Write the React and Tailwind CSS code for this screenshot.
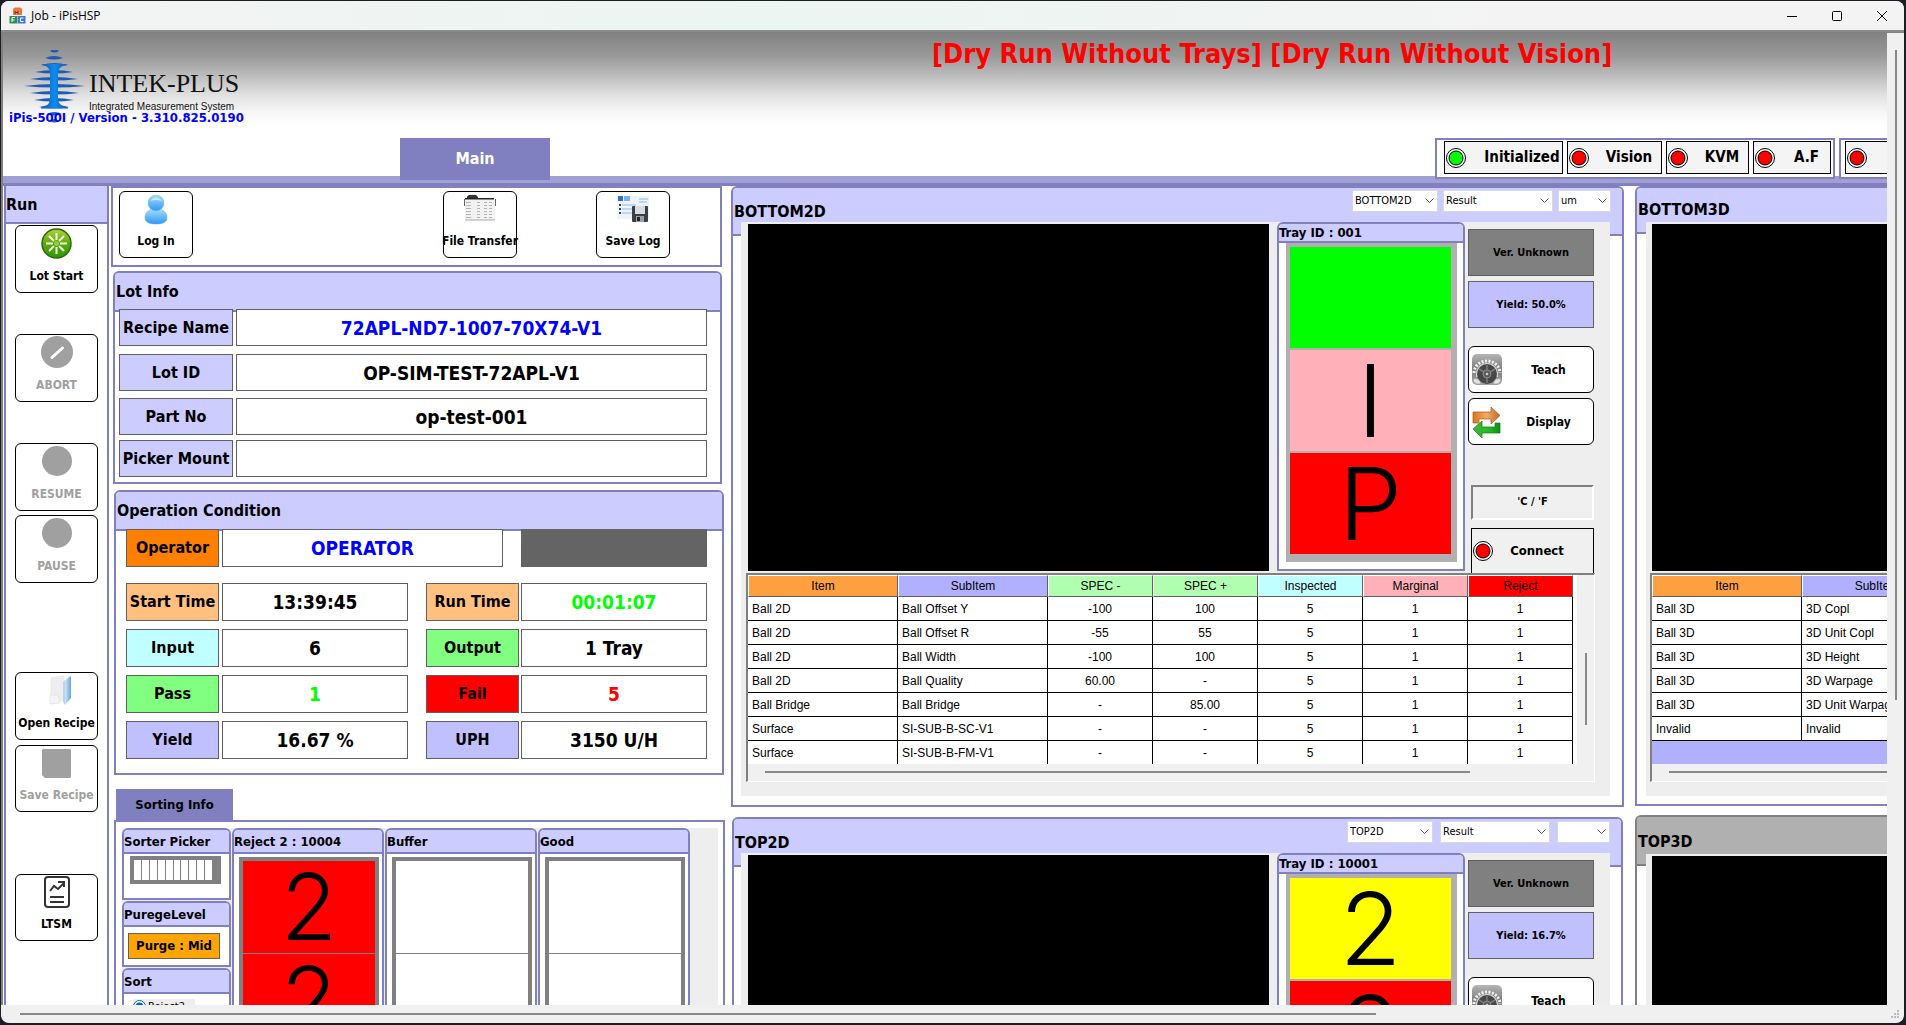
import React from "react";

/* ---------- icons ---------- */

function AppIcon() {
  return (
    <svg width="17" height="17" viewBox="0 0 17 17" aria-hidden="true">
      <path d="M4 2l2-1.500h5.500L13 2v6H4z" fill="#e8763a" />
      <rect x="4.500" y="2.500" width="6.500" height="5.500" fill="#f08a4a" />
      <path d="M6 3.500v4M9 3.500v4M6 5.500h3" stroke="#8c1c10" />
      <rect x="0.500" y="9" width="7.500" height="7.500" fill="#2f8f4e" />
      <path d="M3 15v-4.500h3M3 13h2.500" stroke="#fff" fill="none" />
      <rect x="8.500" y="9" width="8" height="7.500" fill="#3b78c8" />
      <path d="M14.500 11h-3v3.500h3" stroke="#fff" fill="none" />
    </svg>
  );
}

function TowerLogo() {
  const bars = [
    [1, 26, 35], [8, 21, 39], [15, 17, 44], [22, 11, 49], [29, 6, 54], [36, 0, 61], [43, 6, 55], [50, 10, 50], [57, 15, 45], [64, 23, 38], [71, 26, 35],
  ];
  return (
    <svg width="61" height="74" viewBox="0 0 61 74" aria-hidden="true">
      <defs>
        <linearGradient id="tower" x1="0" x2="1">
          <stop offset="0" stopColor="#1f4fa8" />
          <stop offset="0.500" stopColor="#0a8cf0" />
          <stop offset="1" stopColor="#1f4fa8" />
        </linearGradient>
      </defs>
      {bars.map(([y, a, b]) => (
        <path key={y} d={`M${a} ${y}Q${(a + b) / 2} ${y - 4} ${b} ${y}Q${(a + b) / 2} ${y + 3} ${a} ${y}Z`} fill="#1c5cb8" />
      ))}
      <path d="M17 14h27q-9 2-10 8v28q1 6 10 7.500v1H17v-1q8-1.500 9-7.500V22q-1-6-9-8z" fill="url(#tower)" />
    </svg>
  );
}

function PersonIcon() {
  return (
    <svg width="24" height="31" viewBox="0 0 24 31" aria-hidden="true">
      <defs>
        <linearGradient id="person" x1="0" y1="0" x2="0" y2="1">
          <stop offset="0" stopColor="#a8dcfb" />
          <stop offset="1" stopColor="#2f97f5" />
        </linearGradient>
      </defs>
      <path d="M1 24c0-6 4-9 11-9s11 3 11 9c0 4-4 6-11 6S1 28 1 24z" fill="url(#person)" stroke="#5aaef0" strokeWidth="0.500" />
      <circle cx="12" cy="9" r="8" fill="url(#person)" stroke="#7cc4f5" strokeWidth="0.500" />
      <path d="M6 7q6-7 12 0q-6-2-12 0z" fill="#d0ecfd" />
    </svg>
  );
}

function FileTransferIcon() {
  return (
    <svg width="32" height="29" viewBox="0 0 32 29" aria-hidden="true">
      <path d="M3 4V1.500L5 0h7l2 2v2z" fill="#333" />
      <path d="M1 3h29v1.500H1z" fill="#222" />
      <path d="M0.500 4v7M31.500 4v7" stroke="#666" />
      <rect x="1" y="5" width="30" height="20" fill="#f2f2f2" />
      <path d="M2 7.500h27M2 10.500h27M2 13.500h27M2 16.500h27M2 19.500h27M2 22.500h27" stroke="#b4b4b4" strokeDasharray="5 6 3 4 3 2 3 4" />
      <path d="M1 25h30" stroke="#aaa" />
    </svg>
  );
}

function SaveLogIcon() {
  return (
    <svg width="32" height="28" viewBox="0 0 32 28" aria-hidden="true">
      <rect x="0" y="1" width="32" height="23" fill="#eef4fb" />
      <rect x="1" y="1" width="5" height="5" fill="#2f6fc8" />
      <rect x="7" y="1" width="6" height="5" fill="#7db0ea" />
      <path d="M22 4h9M22 7h8" stroke="#8db4e6" />
      <path d="M5 10h14M5 14h12M5 18h12" stroke="#8fb6e8" />
      <path d="M2 10h2M2 14h2M2 18h2" stroke="#1e3f94" strokeWidth="2" />
      <rect x="15" y="11" width="16" height="16" rx="1" fill="#3b3f48" />
      <rect x="18" y="11" width="10" height="8" fill="#d9dde3" />
      <rect x="19" y="21" width="8" height="6" fill="#9aa0aa" />
      <rect x="20" y="22" width="3" height="4" fill="#22252b" />
    </svg>
  );
}

function LotStartIcon() {
  return (
    <svg width="31" height="31" viewBox="0 0 31 31" aria-hidden="true">
      <defs>
        <linearGradient id="lot" x1="0" y1="0" x2="0" y2="1">
          <stop offset="0" stopColor="#b4d23a" />
          <stop offset="0.500" stopColor="#5aa80a" />
          <stop offset="1" stopColor="#2f9a06" />
        </linearGradient>
      </defs>
      <circle cx="15.500" cy="15.500" r="14.500" fill="url(#lot)" stroke="#2c6a08" strokeWidth="1.500" />
      <path d="M15.500 5v7M15.500 19v7M5 15.500h7M19 15.500h7M8 8l5 5M18 18l5 5M23 8l-5 5M13 18l-5 5" stroke="#f4f8e6" strokeWidth="2" />
      <circle cx="15.500" cy="15.500" r="2.500" fill="#8fd03a" />
    </svg>
  );
}

function AbortIcon() {
  return (
    <svg width="32" height="32" viewBox="0 0 32 32" aria-hidden="true">
      <circle cx="16" cy="16" r="16" fill="#a0a0a0" />
      <path d="M11 21.500L21.500 12" stroke="#fff" strokeWidth="3" strokeLinecap="round" />
    </svg>
  );
}

function DiscIcon() {
  return (
    <svg width="30" height="30" viewBox="0 0 30 30" aria-hidden="true">
      <circle cx="15" cy="15" r="15" fill="#a0a0a0" />
    </svg>
  );
}

function OpenRecipeIcon() {
  return (
    <svg width="30" height="31" viewBox="0 0 30 31" aria-hidden="true">
      <defs>
        <linearGradient id="flap" x1="0" x2="1">
          <stop offset="0" stopColor="#d3e7f7" />
          <stop offset="1" stopColor="#6aa5d8" />
        </linearGradient>
      </defs>
      <path d="M9 3l13-2v24L9 29z" fill="#eeeeee" stroke="#dcdcdc" strokeWidth="0.500" />
      <path d="M8 20h8l2 8-10 1z" fill="#f5f5f5" stroke="#d8d8d8" strokeWidth="0.500" />
      <path d="M23 5l6-4v22l-6 7z" fill="url(#flap)" />
      <path d="M23 5l-2 2v20l2 3z" fill="#b7d6ee" />
    </svg>
  );
}

function SaveRecipeIcon() {
  return (
    <svg width="29" height="29" viewBox="0 0 29 29" aria-hidden="true">
      <path d="M1 0h27l1 1v27l-1 1H3l-3-3V1z" fill="#a0a0a0" />
    </svg>
  );
}

function ReportIcon() {
  return (
    <svg width="26" height="32" viewBox="0 0 26 32" fill="none" stroke="#333" strokeWidth="2" aria-hidden="true">
      <rect x="1" y="1" width="24" height="30" rx="3" />
      <path d="M6 15l4-5 4 3 6-6M14 6h6v5" />
      <path d="M6 21h14M6 26h14" />
    </svg>
  );
}

function GearIcon() {
  return (
    <svg width="30" height="31" viewBox="0 0 30 31" aria-hidden="true">
      <defs>
        <linearGradient id="gear" x1="0" y1="0" x2="0" y2="1">
          <stop offset="0" stopColor="#b5b5b5" />
          <stop offset="0.500" stopColor="#7c7c7c" />
          <stop offset="1" stopColor="#a5a5a5" />
        </linearGradient>
      </defs>
      <rect width="30" height="31" rx="5" fill="url(#gear)" />
      <path d="M2 19a13 12 0 0 1 26 0" fill="none" stroke="#f0f0f0" strokeWidth="3" strokeDasharray="2 1.500" />
      <path d="M4 20a11 11 0 0 1 22 0v3H4z" fill="#d8d8d8" />
      <circle cx="15" cy="20" r="10" fill="#484848" />
      <path d="M15 20L7 15M15 20l8-5M15 20v9M15 20V11" stroke="#7a7a7a" strokeWidth="1.500" />
      <circle cx="15" cy="20" r="4" fill="#5c5c5c" stroke="#8c8c8c" />
      <circle cx="15" cy="20" r="1.300" fill="#c8c8c8" />
      <path d="M1 25q6-2 8 5H5q-4-1-4-5zM29 25q-6-2-8 5h4q4-1 4-5z" fill="#e4e4e4" stroke="#888" strokeWidth="0.500" />
    </svg>
  );
}

function SwapIcon() {
  return (
    <svg width="29" height="32" viewBox="0 0 29 32" aria-hidden="true">
      <defs>
        <linearGradient id="swapA" x1="0" x2="1">
          <stop offset="0" stopColor="#d87818" />
          <stop offset="0.500" stopColor="#f8a860" />
          <stop offset="1" stopColor="#b86a30" />
        </linearGradient>
        <linearGradient id="swapB" x1="0" x2="1">
          <stop offset="0" stopColor="#46b040" />
          <stop offset="0.600" stopColor="#1cc01c" />
          <stop offset="1" stopColor="#128a1c" />
        </linearGradient>
      </defs>
      <path d="M1 6h18V1l9 8.500-9 8.500v-5H7v4H1z" fill="url(#swapA)" stroke="#a85a18" strokeWidth="0.700" />
      <path d="M28 17v10H10v5L1 23l9-8v6h13v-4z" fill="url(#swapB)" stroke="#117a1a" strokeWidth="0.700" />
    </svg>
  );
}

function Led({ on }) {
  return (
    <svg width="20" height="20" viewBox="0 0 20 20" className="shrink-0" aria-hidden="true">
      <circle cx="10" cy="10" r="9.500" fill="#fff" stroke="#000" />
      <circle cx="10" cy="10" r="7" fill={on ? "#00ff00" : "#ff0000"} stroke="#000" />
    </svg>
  );
}

/* ---------- shared controls ---------- */

function IconButton({ icon, label, disabled, className = "" }) {
  return (
    <button
      disabled={disabled}
      className={`flex shrink-0 flex-col items-center justify-between whitespace-nowrap rounded-md border border-black bg-white pt-px pb-2 text-[12px] leading-4 font-bold ${
        disabled ? "text-[#a0a0a0]" : "text-black"
      } ${className}`}
    >
      <span className="flex h-8 items-center">{icon}</span>
      <span>{label}</span>
    </button>
  );
}

function Drop({ label, value, className }) {
  return (
    <span className={`relative flex h-[22px] ${className}`}>
      <select aria-label={label} defaultValue={value} className="w-full appearance-none border border-[#d8d8d8] bg-white pl-[2px] text-[11px] leading-4 text-black">
        <option>{value}</option>
      </select>
      <svg width="9" height="6" viewBox="0 0 9 6" className="pointer-events-none absolute top-2 right-1" fill="none" stroke="#555" aria-hidden="true">
        <path d="M0.500 0.500l4 4 4-4" />
      </svg>
    </span>
  );
}

function Group({ title, className = "", children }) {
  return (
    <section className={`flex flex-col rounded-t-md border-2 border-[#8080c0] bg-white ${className}`}>
      <h3 className="flex h-[24px] shrink-0 items-center overflow-hidden rounded-t-sm border-b-2 border-[#8080c0] bg-[#ccccff] pt-px text-[13px] leading-4 font-bold whitespace-nowrap">{title}</h3>
      {children}
    </section>
  );
}

/* ---------- window chrome ---------- */

function TitleBar() {
  return (
    <div className="flex h-[31px] shrink-0 items-center justify-between border-b-2 border-[#8a8a8a] bg-linear-to-r from-[#f3f3f3] via-[#ebf5f1] via-40% to-[#f3f3f3] to-80% pl-2">
      <div className="flex items-center gap-[5px] font-['Open_Sans','Noto_Sans',sans-serif] text-[12px]">
        <AppIcon />
        Job - iPisHSP
      </div>
      <div className="flex">
        <button aria-label="Minimize" className="flex h-7 w-[45px] items-center justify-center">
          <svg width="10" height="10" stroke="#000"><path d="M0 5.500h10" /></svg>
        </button>
        <button aria-label="Maximize" className="flex h-7 w-[45px] items-center justify-center">
          <svg width="10" height="10" fill="none" stroke="#000"><rect x="0.500" y="0.500" width="9" height="9" rx="1" /></svg>
        </button>
        <button aria-label="Close" className="flex h-7 w-[45px] items-center justify-center">
          <svg width="10" height="10" stroke="#000"><path d="M0 0l10 10M10 0L0 10" /></svg>
        </button>
      </div>
    </div>
  );
}

function Status({ label, on, className, textClass = "pl-2" }) {
  return (
    <div className={`flex h-[33px] shrink-0 items-center overflow-hidden border border-black bg-[#f4f4f4] pl-px text-[15px] font-bold ${className}`}>
      <Led on={on} />
      <span className={`flex-1 text-center ${textClass}`}>{label}</span>
    </div>
  );
}

function Header() {
  return (
    <header className="shrink-0">
      <div className="flex h-[143px] bg-[linear-gradient(to_bottom,#828282_0%,#999999_16%,#c2c2c2_32%,#e2e2e2_44%,#f6f6f6_55%,#ffffff_65%)]">
        <div className="w-[397px] shrink-0 pl-[6px]">
          <div className="flex h-[77px] pt-[17px] pl-[15px]">
            <div className="h-[60px]"><TowerLogo /></div>
            <div className="pt-[18px] pl-1 font-['Liberation_Serif',serif] text-[26px] leading-8 whitespace-nowrap text-[#111]">
              INTEK-PLUS
              <div className="font-['Liberation_Sans',sans-serif] text-[10px] leading-[14px]">Integrated Measurement System</div>
            </div>
          </div>
          <div className="relative text-[13px] leading-4 font-bold text-[#0000ff]">iPis-500I / Version - 3.310.825.0190</div>
        </div>
        <div className="flex min-w-0 flex-1 flex-col justify-between">
          <div className="pl-[532px] text-[27px] leading-[42px] font-bold whitespace-nowrap text-[#ff0000]">[Dry Run Without Trays] [Dry Run Without Vision]</div>
          <div className="relative z-10 -mb-1 flex items-start justify-between">
            <button className="h-[42px] w-[150px] bg-[#8080c0] text-[16px] font-bold text-white">Main</button>
            <div className="flex gap-1">
              <div className="flex gap-1 border-2 border-[#8080c0] bg-white pt-px pr-[2px] pb-[3px] pl-[7px]">
                <Status label="Initialized" on className="w-[119px]" textClass="pl-4" />
                <Status label="Vision" className="w-[95px]" />
                <Status label="KVM" className="w-[83px]" />
                <Status label="A.F" className="w-[78px]" />
              </div>
              <div className="w-[48px] overflow-hidden border-2 border-r-0 border-[#8080c0] bg-white pt-px pl-1">
                <Status label="" className="w-[95px]" />
              </div>
            </div>
          </div>
        </div>
      </div>
      <div className="h-[10px] border-b-[3px] border-[#8080c0] bg-[#a0a0d4]" />
    </header>
  );
}

/* ---------- run column ---------- */

function RunColumn() {
  return (
    <nav className="flex w-[105px] shrink-0 flex-col border-x-2 border-[#8080c0] bg-white">
      <h2 className="flex h-[38px] shrink-0 items-center border-b-2 border-[#8080c0] bg-[#ccccff] pt-px text-[16px] font-bold">Run</h2>
      <div className="flex flex-col items-center pt-px">
        <IconButton className="h-[68px] w-[83px]" icon={<LotStartIcon />} label="Lot Start" />
        <IconButton className="mt-[41px] h-[68px] w-[83px]" icon={<AbortIcon />} label="ABORT" disabled />
        <IconButton className="mt-[41px] h-[68px] w-[83px]" icon={<DiscIcon />} label="RESUME" disabled />
        <IconButton className="mt-1 h-[68px] w-[83px]" icon={<DiscIcon />} label="PAUSE" disabled />
        <IconButton className="mt-[89px] h-[68px] w-[83px]" icon={<OpenRecipeIcon />} label="Open Recipe" />
        <IconButton className="mt-[5px] h-[67px] w-[83px]" icon={<SaveRecipeIcon />} label="Save Recipe" disabled />
        <IconButton className="mt-[62px] h-[67px] w-[83px]" icon={<ReportIcon />} label="LTSM" />
      </div>
    </nav>
  );
}

/* ---------- information column ---------- */

function Label({ className, children }) {
  return <div className={`flex shrink-0 items-center justify-center border border-[#606060] text-[16px] font-bold whitespace-nowrap ${className}`}>{children}</div>;
}

function Value({ className = "", children }) {
  return <div className={`flex items-center justify-center border border-[#606060] bg-white pt-px text-[19px] font-bold whitespace-nowrap ${className}`}>{children}</div>;
}

function LotRow({ label, value, className = "", rowClass = "" }) {
  return (
    <div className={`flex h-[37px] gap-[3px] ${rowClass}`}>
      <Label className="w-[114px] bg-[#ccccff]">{label}</Label>
      <Value className={`flex-1 ${className}`}>{value}</Value>
    </div>
  );
}

function ConditionRow({ left, right }) {
  return (
    <div className="flex h-[38px] justify-between">
      <div className="flex gap-[3px]">
        <Label className={`w-[93px] ${left[2]}`}>{left[0]}</Label>
        <Value className={`w-[186px] ${left[3] || ""}`}>{left[1]}</Value>
      </div>
      <div className="flex gap-[2px]">
        <Label className={`w-[93px] ${right[2]}`}>{right[0]}</Label>
        <Value className={`w-[186px] ${right[3] || ""}`}>{right[1]}</Value>
      </div>
    </div>
  );
}

function SortTray({ title, color = "bg-white", mark = "" }) {
  return (
    <Group title={title} className="w-[152px] shrink-0 border-b-0">
      <div className="mt-[3px] mr-[3px] ml-[5px] flex flex-1 flex-col gap-px border-4 border-b-0 border-[#808080] bg-[#808080]">
        {[0, 1].map((i) => (
          <div key={i} className={`h-[92px] shrink-0 overflow-hidden text-center text-[92px] leading-[92px] font-light text-black font-['Inter',sans-serif] ${color}`}>{mark}</div>
        ))}
      </div>
    </Group>
  );
}

function InfoColumn() {
  return (
    <div className="flex w-[614px] shrink-0 flex-col overflow-hidden">
      <div className="mr-[3px] flex h-[81px] shrink-0 border-2 border-[#8080c0] px-[6px] pt-[3px]">
        <IconButton className="h-[67px] w-[74px]" icon={<PersonIcon />} label="Log In" />
        <IconButton className="ml-[250px] h-[67px] w-[74px]" icon={<FileTransferIcon />} label="File Transfer" />
        <IconButton className="ml-[79px] h-[67px] w-[74px]" icon={<SaveLogIcon />} label="Save Log" />
      </div>

      <section className="mt-1 mr-[3px] ml-[2px] h-[213px] shrink-0 rounded-t-md border-2 border-[#8080c0]">
        <h2 className="flex h-[39px] items-center rounded-t-sm border-b-2 border-[#8080c0] bg-[#ccccff] pt-px pl-px text-[16px] font-bold">Lot Info</h2>
        <div className="-mt-[3px] flex flex-col pr-[13px] pl-1">
          <LotRow label="Recipe Name" value="72APL-ND7-1007-70X74-V1" className="text-[#0000ff]" />
          <LotRow rowClass="mt-[8px]" label="Lot ID" value="OP-SIM-TEST-72APL-V1" />
          <LotRow rowClass="mt-[7px]" label="Part No" value="op-test-001" />
          <LotRow rowClass="mt-[5px]" label="Picker Mount" value="" />
        </div>
      </section>

      <section className="mt-[6px] mr-px ml-[3px] h-[285px] shrink-0 rounded-t-md border-2 border-[#8080c0]">
        <h2 className="flex h-[39px] items-center rounded-t-sm border-b-2 border-[#8080c0] bg-[#ccccff] pt-px pl-px text-[16px] font-bold">Operation Condition</h2>
        <div className="-mt-[2px] flex flex-col gap-[8px] pr-[15px] pl-[10px]">
          <div className="mb-2 flex h-[38px] justify-between">
            <div className="flex gap-[3px]">
              <Label className="w-[93px] bg-[#ff8000]">Operator</Label>
              <Value className="w-[281px] text-[#0000ff]">OPERATOR</Value>
            </div>
            <div className="w-[186px] bg-[#646464]" />
          </div>
          <ConditionRow left={["Start Time", "13:39:45", "bg-[#ffc080]"]} right={["Run Time", "00:01:07", "bg-[#ffc080]", "text-[#00ff00]"]} />
          <ConditionRow left={["Input", "6", "bg-[#c0ffff]"]} right={["Output", "1 Tray", "bg-[#80ff80]"]} />
          <ConditionRow left={["Pass", "1", "bg-[#80ff80]", "text-[#00ff00]"]} right={["Fail", "5", "bg-[#ff0000]", "text-[#ff0000]"]} />
          <ConditionRow left={["Yield", "16.67 %", "bg-[#c0c0ff]"]} right={["UPH", "3150 U/H", "bg-[#c0c0ff]"]} />
        </div>
      </section>

      <button className="mt-[14px] ml-[5px] h-[31px] w-[117px] shrink-0 bg-[#8080c0] text-[13px] font-bold">Sorting Info</button>
      <section className="ml-[3px] flex min-h-0 flex-1 overflow-hidden border-2 border-b-0 border-[#8080c0] pt-[6px] pr-[5px] pl-[6px]">
        <div className="flex flex-1 gap-px bg-[#eeeeee]">
          <div className="flex w-[109px] shrink-0 flex-col gap-px">
            <Group title="Sorter Picker" className="h-[72px] shrink-0">
              <div className="mt-[2px] mr-2 ml-[6px] flex h-7 gap-px border-4 border-r-[9px] border-[#808080] bg-[#808080]">
                {Array.from({ length: 10 }, (_, i) => <span key={i} className="flex-1 bg-white" />)}
              </div>
            </Group>
            <Group title="PuregeLevel" className="h-[66px] shrink-0">
              <div className="mt-[6px] mr-[9px] ml-1 flex h-[26px] items-center justify-center border border-[#606060] bg-[#ffa500] text-[13px] font-bold">Purge : Mid</div>
            </Group>
            <Group title="Sort" className="shrink-0">
              <label className="mt-[5px] ml-[9px] flex h-6 w-[62px] items-start gap-[2px] bg-[#eeeeee] text-[11px] leading-4">
                <input type="radio" name="sort" defaultChecked className="m-0 mt-px size-[13px] shrink-0 accent-[#005fb8]" />
                Reject2
              </label>
            </Group>
          </div>
          <SortTray title="Reject 2 : 10004" color="bg-[#ff0000]" mark="2" />
          <SortTray title="Buffer" />
          <SortTray title="Good" />
        </div>
      </section>
    </div>
  );
}

/* ---------- vision panels ---------- */

const COLUMNS = [
  ["Item", "bg-[#ffa040]"],
  ["SubItem", "bg-[#b0b0ff]"],
  ["SPEC -", "bg-[#b0ffb0]"],
  ["SPEC +", "bg-[#b0ffb0]"],
  ["Inspected", "bg-[#c0ffff]"],
  ["Marginal", "bg-[#ffb0b8]"],
  ["Reject", "bg-[#ff0000]"],
];

const ROWS_2D = [
  ["Ball 2D", "Ball Offset Y", "-100", "100", "5", "1", "1"],
  ["Ball 2D", "Ball Offset R", "-55", "55", "5", "1", "1"],
  ["Ball 2D", "Ball Width", "-100", "100", "5", "1", "1"],
  ["Ball 2D", "Ball Quality", "60.00", "-", "5", "1", "1"],
  ["Ball Bridge", "Ball Bridge", "-", "85.00", "5", "1", "1"],
  ["Surface", "SI-SUB-B-SC-V1", "-", "-", "5", "1", "1"],
  ["Surface", "SI-SUB-B-FM-V1", "-", "-", "5", "1", "1"],
];

const ROWS_3D = [
  ["Ball 3D", "3D Copl"],
  ["Ball 3D", "3D Unit Copl"],
  ["Ball 3D", "3D Height"],
  ["Ball 3D", "3D Warpage"],
  ["Ball 3D", "3D Unit Warpage"],
  ["Invalid", "Invalid"],
];

function ResultTable({ columns, rows, width }) {
  return (
    <table className={`table-fixed border-separate border-spacing-0 bg-white font-['Liberation_Sans',sans-serif] text-[12px] leading-4 ${width}`}>
      <colgroup>
        {columns.map(([name], i) => <col key={name} className={i < 2 ? "w-[150px]" : "w-[105px]"} />)}
      </colgroup>
      <thead>
        <tr className="h-[22px]">
          {columns.map(([name, color]) => (
            <th key={name} className={`border-r border-b border-r-[#606060] border-b-[#606060] border-t border-t-white border-l border-l-white p-0 font-normal ${color}`}>{name}</th>
          ))}
        </tr>
      </thead>
      <tbody>
        {rows.map((row, r) => (
          <tr key={r} className="h-6">
            {row.map((cell, c) => (
              <td key={c} className={`overflow-hidden border-r border-b border-black p-0 whitespace-nowrap ${c < 2 ? "pl-1 text-left" : "text-center"}`}>{cell}</td>
            ))}
          </tr>
        ))}
      </tbody>
    </table>
  );
}

function Tray({ id, cells, className = "" }) {
  return (
    <section className={`flex w-[188px] shrink-0 flex-col rounded-t-md border-2 border-[#8080c0] bg-white ${className}`}>
      <h3 className="flex h-[19px] shrink-0 items-center rounded-t-sm border-b-2 border-[#8080c0] bg-[#ccccff] text-[13px] leading-4 font-bold">{id}</h3>
      <div className="mr-[6px] ml-[7px] flex flex-col gap-[2px] border-4 border-r-[6px] border-b-8 border-[#b0b0b0] bg-[#b0b0b0]">
        {cells.map(([mark, color], i) => (
          <div key={i} className={`h-[101px] overflow-hidden text-center text-[101px] leading-[101px] font-light text-black font-['Inter',sans-serif] ${color}`}>{mark}</div>
        ))}
      </div>
    </section>
  );
}

function Tag({ className, children }) {
  return <div className={`flex h-[47px] shrink-0 items-center justify-center border border-[#606060] text-[11px] font-bold ${className}`}>{children}</div>;
}

function SideButton({ icon, children, className = "" }) {
  return (
    <button className={`flex h-[47px] shrink-0 items-center rounded-md border border-black bg-white pl-[3px] text-[12px] font-bold ${className}`}>
      <span className="w-[30px]">{icon}</span>
      <span className="flex-1 pl-[2px]">{children}</span>
    </button>
  );
}

function SideControls({ yieldText }) {
  return (
    <div className="flex w-[126px] shrink-0 flex-col pt-[7px]">
      <Tag className="bg-[#808080] pt-px">Ver. Unknown</Tag>
      <Tag className="mt-[5px] bg-[#c0c0ff] pt-px">{yieldText}</Tag>
      <SideButton className="mt-[18px]" icon={<GearIcon />}>Teach</SideButton>
      <SideButton className="mt-[5px]" icon={<SwapIcon />}>Display</SideButton>
      <div className="mt-10 ml-[3px] flex h-[35px] shrink-0 items-center justify-center border-2 border-t-[#808080] border-r-white border-b-white border-l-[#808080] bg-[#f0f0f0] text-[11px] font-bold">'C / 'F</div>
      <button className="mt-2 ml-[3px] flex h-[45px] shrink-0 items-center border border-b-0 border-black bg-[#f0f0f0] pl-px text-[13px] font-bold">
        <Led />
        <span className="flex-1 pr-3">Connect</span>
      </button>
    </div>
  );
}

function VisionPanel({ title, unit, tray, cells, yieldText, rows, className, dropGap, bodyMargin }) {
  return (
    <section className={`flex shrink-0 flex-col rounded-t-md border-2 border-[#8080c0] bg-white ${className}`}>
      <div className="flex h-[48px] shrink-0 items-start justify-between rounded-t-sm border-b-2 border-[#8080c0] bg-[#ccccff] pt-[2px] pr-[11px] pl-px">
        <h2 className="mt-[10px] text-[16px] leading-6 font-bold">{title}</h2>
        <div className={`flex ${dropGap}`}>
          <Drop label={`${title} view`} value={title} className="w-[86px]" />
          <Drop label={`${title} mode`} value="Result" className="w-[110px]" />
          <Drop label={`${title} unit`} value={unit} className="w-[53px]" />
        </div>
      </div>
      <div className={`-mt-[14px] mb-[9px] flex flex-1 flex-col bg-[#eeeeee] pr-[15px] pl-[5px] ${bodyMargin}`}>
        <div className="flex h-[351px] shrink-0 pr-px">
          <div className="mt-[2px] mb-[2px] ml-[2px] flex-1 bg-black" />
          <Tray id={tray} cells={cells} className="mr-[3px] mb-[2px] ml-2" />
          <SideControls yieldText={yieldText} />
        </div>
        <div className="flex h-[209px] shrink-0 border-t-2 border-r border-b border-l-2 border-t-[#808080] border-r-white border-b-white border-l-[#808080] bg-[#f0f0f0]">
          <div className="flex min-w-0 flex-1 flex-col">
            <div className="h-[189px] overflow-hidden bg-white">
              <ResultTable columns={COLUMNS} rows={rows} width="w-[825px]" />
            </div>
            <div className="ml-[17px] mt-[7px] h-[2px] w-[85%] bg-[#888]" />
          </div>
          <div className="w-[17px] pt-[78px]">
            <div className="mx-auto h-[72px] w-[2px] bg-[#888]" />
          </div>
        </div>
      </div>
    </section>
  );
}

function Vision3DPanel({ title, tone, head, className, rows }) {
  return (
    <section className={`flex shrink-0 flex-col rounded-tl-md border-2 border-r-0 bg-white ${tone} ${className}`}>
      <h2 className={`shrink-0 rounded-tl-sm border-b-2 pl-px text-[16px] leading-6 font-bold ${head}`}>{title}</h2>
      <div className="-mt-[12px] mb-[8px] ml-[9px] flex flex-1 flex-col bg-[#eeeeee] pl-[4px]">
        <div className="flex h-[351px] shrink-0">
          <div className="mt-[2px] mb-[2px] ml-[2px] flex-1 bg-black" />
        </div>
        <div className="h-[209px] shrink-0 overflow-hidden border-t-2 border-b border-l-2 border-t-[#808080] border-b-white border-l-[#808080] bg-[#f0f0f0]">
          <div className="h-[189px] overflow-hidden bg-[#b0b0ff]">
            <ResultTable columns={COLUMNS.slice(0, 2)} rows={rows} width="w-[300px]" />
          </div>
          <div className="mt-[7px] ml-[17px] h-[2px] bg-[#888]" />
        </div>
      </div>
    </section>
  );
}

/* ---------- page ---------- */

export default function App() {
  return (
    <div className="h-screen overflow-hidden bg-[#1c1c24] pt-px pr-[2px] pb-[2px] pl-px font-['DejaVu_Sans_Condensed','DejaVu_Sans',sans-serif] text-black">
      <div className="flex h-full flex-col overflow-hidden rounded-lg bg-[#f0f0f0]">
        <TitleBar />
        <div className="flex min-h-0 flex-1 border-t border-l-2 border-[#808080]">
          <div className="flex min-w-0 flex-1 flex-col overflow-hidden bg-white">
            <Header />
            <main className="flex min-h-0 flex-1 overflow-hidden pl-px">
              <RunColumn />
              <div className="ml-[2px] flex"><InfoColumn /></div>
              <div className="ml-[6px] flex min-w-[893px] flex-1 flex-col gap-[10px]">
                <VisionPanel
                  title="BOTTOM2D" unit="um" tray="Tray ID : 001" yieldText="Yield: 50.0%" rows={ROWS_2D} className="h-[621px]"
                  dropGap="gap-[5px]" bodyMargin="mr-[12px] ml-2"
                  cells={[["", "bg-[#00ff00]"], ["I", "bg-[#ffb0b8]"], ["P", "bg-[#ff0000]"]]}
                />
                <VisionPanel
                  title="TOP2D" unit="" tray="Tray ID : 10001" yieldText="Yield: 16.7%" rows={ROWS_2D} className="mr-px ml-px h-[621px]"
                  dropGap="gap-[7px]" bodyMargin="mr-[11px] ml-[7px]"
                  cells={[["2", "bg-[#ffff00]"], ["2", "bg-[#ff0000]"], ["2", "bg-[#ff0000]"]]}
                />
              </div>
              <div className="ml-[11px] flex w-[252px] shrink-0 flex-col gap-[9px]">
                <Vision3DPanel title="BOTTOM3D" rows={ROWS_3D} className="h-[620px]" tone="border-[#8080c0]" head="h-[46px] pt-[10px] border-[#8080c0] bg-[#ccccff]" />
                <Vision3DPanel title="TOP3D" rows={[]} className="h-[622px]" tone="border-[#808080]" head="h-[49px] pt-[13px] border-[#808080] bg-[#b0b0b0]" />
              </div>
            </main>
          </div>
          <div className="w-[17px] shrink-0 pt-[17px]">
            <div className="mx-auto h-[650px] w-[2px] bg-[#888]" />
          </div>
        </div>
        <div className="relative h-[18px] shrink-0 pt-2 pl-[19px]">
          <div className="h-[2px] w-[72%] bg-[#888]" />
          <svg width="9" height="9" className="absolute right-1 bottom-1" fill="#bbb" aria-hidden="true">
            <path d="M6 0h2v2H6zM3 3h2v2H3zM6 3h2v2H6zM0 6h2v2H0zM3 6h2v2H3zM6 6h2v2H6z" />
          </svg>
        </div>
      </div>
    </div>
  );
}
